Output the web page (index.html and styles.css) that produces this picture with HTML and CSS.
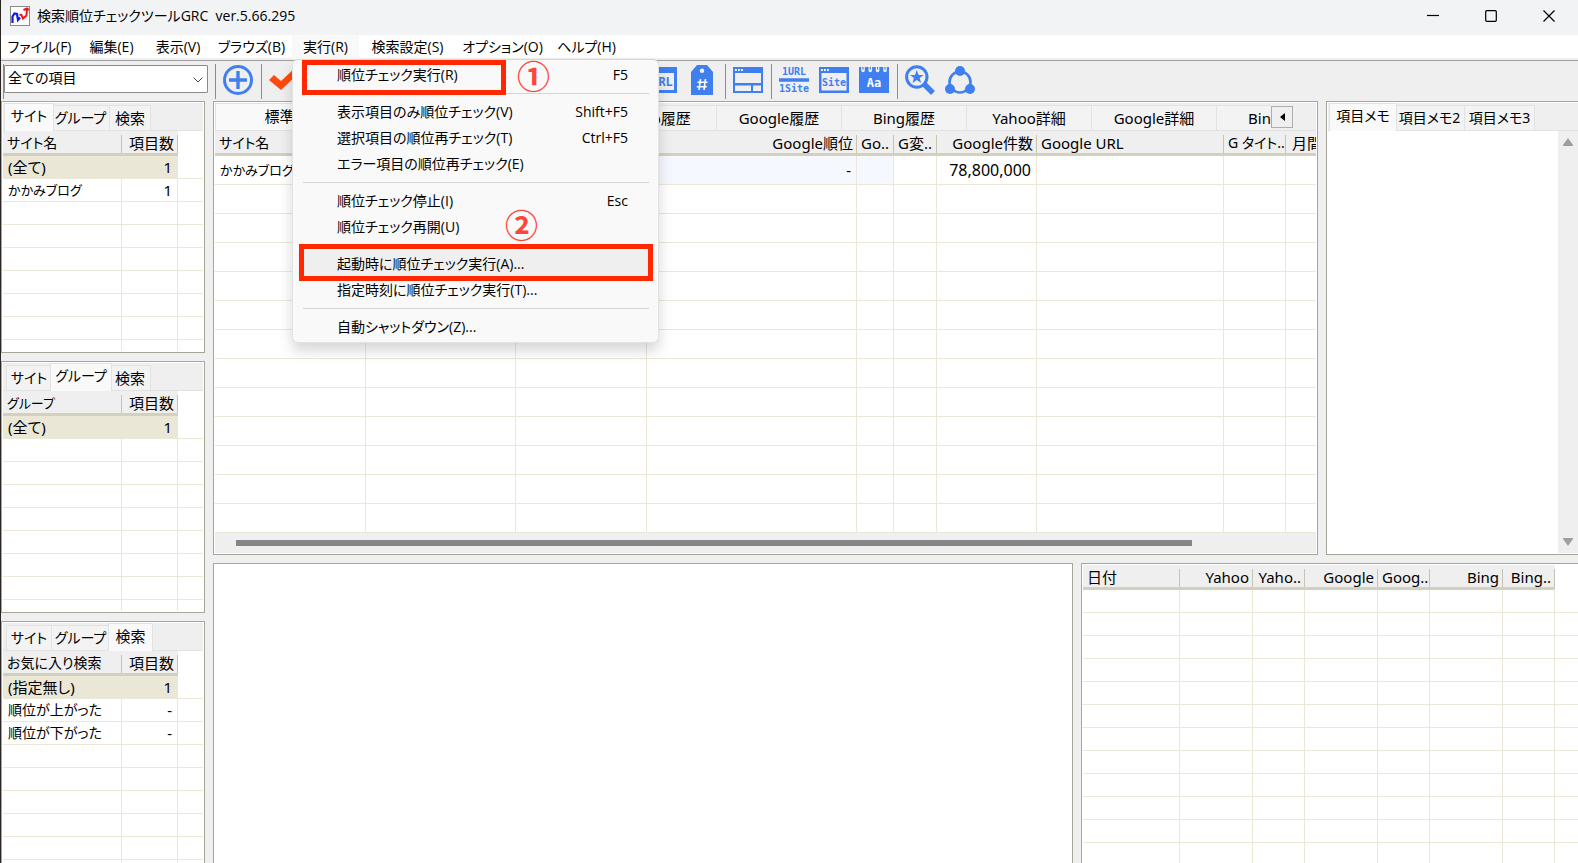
FILE: index.html
```html
<!DOCTYPE html>
<html lang="ja">
<head>
<meta charset="utf-8">
<title>検索順位チェックツールGRC</title>
<link rel="stylesheet" href="styles.css">
</head>
<body>
<div class="window">
  <header class="titlebar">
    <svg class="app-icon" viewBox="0 0 20 20" aria-hidden="true">
      <rect x=".5" y=".5" width="19" height="19" fill="#fff" stroke="#8a8a8a"/>
      <path d="M2.500 17V10.500L4.500 7.500L7 8L8 14L10 11.500" fill="none" stroke="#1414f0" stroke-width="2.200"/>
      <path d="M9.500 8.500L11.500 9L13 12.500L16.500 9.500L17 2M13.500 4L17 2.500L19 4" fill="none" stroke="#f01420" stroke-width="2"/>
    </svg>
    <h1 class="title">検索順位チェックツールGRC&nbsp; ver.5.66.295</h1>
    <button class="win-btn" aria-label="最小化"><svg viewBox="0 0 12 12"><path d="M0 5.500H12"/></svg></button>
    <button class="win-btn" aria-label="最大化"><svg viewBox="0 0 12 12"><rect x=".7" y=".7" width="10.600" height="10.600" rx="1"/></svg></button>
    <button class="win-btn" aria-label="閉じる"><svg viewBox="0 0 12 12"><path d="M.5 .5L11.500 11.500M11.500 .5L.5 11.500"/></svg></button>
  </header>

  <nav class="menubar">
    <button class="menu-btn">ファイル(F)</button>
    <button class="menu-btn">編集(E)</button>
    <button class="menu-btn">表示(V)</button>
    <button class="menu-btn">ブラウズ(B)</button>
    <div class="menu-host">
      <button class="menu-btn open">実行(R)</button>
      <div class="popup">
        <button class="item"><span>順位チェック実行(R)</span><kbd>F5</kbd></button>
        <hr>
        <button class="item"><span>表示項目のみ順位チェック(V)</span><kbd>Shift+F5</kbd></button>
        <button class="item"><span>選択項目の順位再チェック(T)</span><kbd>Ctrl+F5</kbd></button>
        <button class="item"><span>エラー項目の順位再チェック(E)</span></button>
        <hr>
        <button class="item"><span>順位チェック停止(I)</span><kbd>Esc</kbd></button>
        <button class="item"><span>順位チェック再開(U)</span></button>
        <hr>
        <button class="item hover"><span>起動時に順位チェック実行(A)...</span></button>
        <button class="item"><span>指定時刻に順位チェック実行(T)...</span></button>
        <hr>
        <button class="item"><span>自動シャットダウン(Z)...</span></button>
        <div class="mark mark-run"></div>
        <div class="mark mark-startup"></div>
        <span class="num num-one">①</span>
        <span class="num num-two">②</span>
      </div>
    </div>
    <button class="menu-btn">検索設定(S)</button>
    <button class="menu-btn">オプション(O)</button>
    <button class="menu-btn">ヘルプ(H)</button>
  </nav>

  <div class="toolbar">
    <div class="combo">
      <select aria-label="表示項目"><option>全ての項目</option></select>
      <svg viewBox="0 0 10 6" aria-hidden="true"><path d="M.5 .5L5 5L9.500 .5"/></svg>
    </div>
    <i class="sep"></i>
    <button class="tool" aria-label="追加"><svg viewBox="0 0 30 30"><circle cx="15" cy="15" r="13.500" fill="none" stroke="#3f7ff0" stroke-width="3"/><path d="M15 6V24M6 15H24" stroke="#3f7ff0" stroke-width="3.400"/></svg></button>
    <i class="sep"></i>
    <button class="tool" aria-label="順位チェック"><svg viewBox="0 0 30 30"><path d="M0 15L5 10L12 16L25 4L30 8L12 25Z" fill="#ff4a0c"/></svg></button>
    <div class="tool-gap"></div>
    <button class="tool" aria-label="URL"><svg viewBox="0 0 30 30"><path d="M0 2H30V28H0ZM3 8V25H27V8Z" fill="#3f7ff0" fill-rule="evenodd"/><text class="t-mid" x="15" y="21">URL</text></svg></button>
    <button class="tool" aria-label="タグ"><svg viewBox="0 0 30 30"><path d="M10 0H20L26 7V30H4V7ZM15 3.500A2.200 2.200 0 1 0 15 8A2.200 2.200 0 1 0 15 3.500Z" fill="#3f7ff0" fill-rule="evenodd"/><path d="M13.500 14L12 25M18.500 14L17 25M10.500 17.300H20.500M9.800 21.800H19.800" stroke="#fff" stroke-width="1.600"/></svg></button>
    <i class="sep"></i>
    <button class="tool" aria-label="画面"><svg viewBox="0 0 30 30"><path d="M0 2H30V28H0ZM2 8V18H28V8ZM2 20.500V26H18V20.500ZM20 20.500V26H28V20.500Z" fill="#3f7ff0" fill-rule="evenodd"/><path d="M2 5H10" stroke="#fff" stroke-width="1.800" stroke-dasharray="1.800 1.200"/></svg></button>
    <i class="sep"></i>
    <button class="tool" aria-label="1URL 1Site"><svg viewBox="0 0 30 30"><path d="M0 15H30" stroke="#3f7ff0" stroke-width="3.500"/><text class="t-sm" x="15" y="10">1URL</text><text class="t-sm" x="15" y="27">1Site</text></svg></button>
    <button class="tool" aria-label="Site"><svg viewBox="0 0 30 30"><path d="M0 2H30V28H0ZM2.500 8V25.500H27.500V8Z" fill="#3f7ff0" fill-rule="evenodd"/><path d="M2 5H10" stroke="#fff" stroke-width="1.800" stroke-dasharray="1.800 1.200"/><text class="t-site" x="15" y="21">Site</text></svg></button>
    <button class="tool" aria-label="文字"><svg viewBox="0 0 30 30"><path d="M0 2H30V28H0Z" fill="#3f7ff0"/><path d="M2.200 2H5.800V5.500A1.800 1.800 0 0 1 2.200 5.500ZM9.500 2H13.100V5.500A1.800 1.800 0 0 1 9.500 5.500ZM16.800 2H20.400V5.500A1.800 1.800 0 0 1 16.800 5.500ZM24.200 2H27.800V5.500A1.800 1.800 0 0 1 24.200 5.500Z" fill="#efefef"/><path d="M4 2V4.500M11.300 2V4.500M18.600 2V4.500M26 2V4.500" stroke="#3f7ff0" stroke-width="1.200"/><text class="t-aa" x="15" y="21.500">Aa</text></svg></button>
    <i class="sep"></i>
    <button class="tool" aria-label="検索"><svg viewBox="0 0 30 30"><circle cx="11.800" cy="12" r="10.200" fill="none" stroke="#3f7ff0" stroke-width="3"/><path d="M19 19L28 28" stroke="#3f7ff0" stroke-width="5.500"/><path d="M11.800 5L13.600 10H18.600L14.700 13.100L16.100 18L11.800 15.100L7.500 18L8.900 13.100L5 10H10Z" fill="#3f7ff0"/></svg></button>
    <button class="tool" aria-label="共有"><svg viewBox="0 0 30 30"><circle cx="15" cy="17" r="10.500" fill="none" stroke="#3f7ff0" stroke-width="2.600"/><circle cx="15" cy="6" r="5" fill="#3f7ff0"/><circle cx="5" cy="24" r="5" fill="#3f7ff0"/><circle cx="25" cy="24" r="5" fill="#3f7ff0"/></svg></button>
  </div>

  <main class="work">
    <aside class="side">
      <section class="panel side-a">
        <div class="tabs"><button class="tab on w-site">サイト</button><button class="tab w-group">グループ</button><button class="tab w-find">検索</button></div>
        <div class="view">
          <table class="grid small" data-rows="9">
            <colgroup><col class="c119"><col class="c56"><col></colgroup>
            <thead><tr><th class="kana">サイト名</th><th class="r">項目数</th><td class="blank"></td></tr></thead>
            <tbody>
              <tr class="sel"><td>(全て)</td><td class="r">1</td><td></td></tr>
              <tr><td class="site">かかみブログ</td><td class="r">1</td><td></td></tr>
            </tbody>
          </table>
        </div>
      </section>
      <section class="panel side-a">
        <div class="tabs"><button class="tab w-site">サイト</button><button class="tab on w-group">グループ</button><button class="tab w-find">検索</button></div>
        <div class="view">
          <table class="grid small" data-rows="9">
            <colgroup><col class="c119"><col class="c56"><col></colgroup>
            <thead><tr><th class="site">グループ</th><th class="r">項目数</th><td class="blank"></td></tr></thead>
            <tbody><tr class="sel"><td>(全て)</td><td class="r">1</td><td></td></tr></tbody>
          </table>
        </div>
      </section>
      <section class="panel side-b">
        <div class="tabs"><button class="tab w-site">サイト</button><button class="tab w-group">グループ</button><button class="tab on w-find">検索</button></div>
        <div class="view">
          <table class="grid small" data-rows="9">
            <colgroup><col class="c119"><col class="c56"><col></colgroup>
            <thead><tr><th class="kana">お気に入り検索</th><th class="r">項目数</th><td class="blank"></td></tr></thead>
            <tbody>
              <tr class="sel"><td>(指定無し)</td><td class="r">1</td><td></td></tr>
              <tr><td class="kana">順位が上がった</td><td class="r">-</td><td></td></tr>
              <tr><td class="kana">順位が下がった</td><td class="r">-</td><td></td></tr>
            </tbody>
          </table>
        </div>
      </section>
    </aside>

    <div class="content">
      <div class="upper">
        <section class="panel ranks">
          <div class="tabs wide">
            <button class="tab on">標準</button><button class="tab"></button><button class="tab"></button><button class="tab">Yahoo履歴</button><button class="tab">Google履歴</button><button class="tab">Bing履歴</button><button class="tab">Yahoo詳細</button><button class="tab">Google詳細</button><button class="tab last">Bin</button>
            <button class="tab-scroll" aria-label="前のタブ"><svg viewBox="0 0 5 8"><path d="M5 0V8L0 4Z"/></svg></button>
          </div>
          <div class="view">
            <table class="grid large" data-rows="13">
              <colgroup><col class="c151"><col class="c150"><col class="c131"><col class="c210"><col class="c37"><col class="c43"><col class="c100"><col class="c187"><col class="c62"><col></colgroup>
              <thead><tr><th class="kana">サイト名</th><th></th><th></th><th class="r">Google順位</th><th>Go..</th><th>G変..</th><th class="r">Google件数</th><th>Google URL</th><th class="kana">G タイト..</th><th>月間</th></tr></thead>
              <tbody><tr><td class="site">かかみブログ</td><td></td><td></td><td class="r tint">-</td><td class="tint"></td><td></td><td class="r num16">78,800,000</td><td></td><td></td><td></td></tr></tbody>
            </table>
          </div>
          <div class="hscroll"><div class="thumb"></div></div>
        </section>
        <section class="panel memo">
          <div class="tabs"><button class="tab on w-memo">項目メモ</button><button class="tab w-memo2">項目メモ2</button><button class="tab w-memo2">項目メモ3</button></div>
          <div class="memo-body">
            <textarea aria-label="項目メモ"></textarea>
            <div class="vscroll"><svg viewBox="0 0 10 8"><path d="M5 0L10 7V8H0V7Z"/></svg><svg viewBox="0 0 10 8"><path d="M5 8L10 1V0H0V1Z"/></svg></div>
          </div>
        </section>
      </div>
      <div class="lower">
        <section class="panel chart"></section>
        <section class="panel history">
          <div class="view">
            <table class="grid small" data-rows="13">
              <colgroup><col class="c97"><col class="c73"><col class="c52"><col class="c73"><col class="c52"><col class="c73"><col class="c52"><col></colgroup>
              <thead><tr><th>日付</th><th class="r">Yahoo</th><th class="r">Yaho..</th><th class="r">Google</th><th class="r">Goog..</th><th class="r">Bing</th><th class="r">Bing..</th><td class="blank"></td></tr></thead>
              <tbody></tbody>
            </table>
          </div>
        </section>
      </div>
    </div>
  </main>
</div>
<script src="script.js"></script>
</body>
</html>
```
FILE: styles.css
```css
* { box-sizing: border-box; }
html, body { height: 100%; margin: 0; }
body {
  overflow: hidden;
  background: #efefef;
  color: #000;
  font-family: "Noto Sans", "Noto Sans CJK JP", sans-serif;
  font-size: 15px;
  line-height: 22px;
  font-feature-settings: "palt";
}
button, select, textarea { font: inherit; font-feature-settings: inherit; color: inherit; border: 0; margin: 0; padding: 0; background: none; }
button { white-space: nowrap; }
svg { display: block; }

.window { height: 100vh; display: flex; flex-direction: column; border-left: 1px solid #2b2623; }

/* title bar */
.titlebar { flex: none; height: 35px; display: flex; align-items: center; background: #f2f3f4; padding: 0 0 3px 9px; border-top-left-radius: 8px; }
.app-icon { width: 20px; height: 20px; }
.title { flex: 1; margin: 0 0 0 7px; font-family: "Open Sans", "Noto Sans CJK JP", sans-serif; font-size: 14px; font-weight: 400; }
.win-btn { width: 58px; height: 32px; display: grid; place-items: center; }
.win-btn svg { width: 12px; height: 12px; fill: none; stroke: #000; stroke-width: 1.2; }

/* menu bar and drop-down */
.menubar {
  flex: none; height: 25px; display: grid; grid-template-columns: 77px 67px 66px 81px 67px 97px 93px 75px;
  background: #fff; border-bottom: 2px solid #f0f0f0;
  font-family: "Open Sans", "Noto Sans CJK JP", sans-serif; font-size: 14px;
}
.menu-btn { width: 100%; height: 24px; text-align: center; }
.menu-btn.open { background: #f9f9f9; }
.menu-host { position: relative; }
.popup {
  position: absolute; z-index: 5; top: 24px; left: 0; width: 367px;
  display: flex; flex-direction: column; padding: 2px 0;
  background: #f9f9f9; border: 1px solid #e3e3e3; border-top-color: #d8d8d8; border-radius: 6px;
  box-shadow: 0 8px 14px rgba(0, 0, 0, .16);
}
.item { display: flex; justify-content: space-between; align-items: center; height: 26px; margin: 0 5px; padding: 0 25px 0 39px; }
.item.hover { background: #efefef; }
kbd { font-family: inherit; }
.popup hr { width: 346px; height: 1px; margin: 5px auto; border: 0; background: #d6d6d6; }
.mark { position: absolute; border: 5px solid #ff2800; }
.mark-run { left: 9px; top: 0; width: 204px; height: 35px; }
.mark-startup { left: 6px; top: 184px; width: 354px; height: 37px; }
.num { position: absolute; color: #ff4438; font-family: "Noto Sans CJK JP", sans-serif; font-size: 33px; font-weight: 700; line-height: 34px; font-feature-settings: normal; }
.num-one { left: 224px; top: -2px; }
.num-two { left: 212px; top: 147px; }

/* tool bar */
.toolbar { flex: none; height: 41px; display: flex; align-items: center; border-top: 1px solid #a0a0a0; padding-left: 2px; }
.combo { width: 206px; height: 35px; display: flex; align-items: center; position: relative; border-left: 1px solid #8c8c8c; padding: 0 1px 4px 0; }
.combo select { flex: 1; height: 28px; appearance: none; background: #fff; border: 1px solid #8a8a8a; border-radius: 1px; padding: 0 3px 2px; font-size: 14px; }
.combo svg { position: absolute; right: 6px; top: 13px; width: 10px; height: 6px; fill: none; stroke: #444; }
.sep { width: 6px; height: 35px; background: linear-gradient(#8c8c8c, #8c8c8c) 3px 0 / 1px 100% no-repeat; }
.sep:first-of-type { margin-left: 3px; }
.tool { width: 40px; height: 38px; padding: 0 5px 2px; flex: none; }
.tool svg { width: 30px; height: 30px; }
.tool-gap { width: 338px; flex: none; }
.tool text { font-family: "DejaVu Sans Mono", monospace; font-weight: 700; fill: #3f7ff0; text-anchor: middle; }
.t-sm { font-size: 10px; }
.t-mid { font-size: 12px; }
.t-site { font-size: 10px; }
.tool .t-aa { font-size: 12px; fill: #fff; }

/* work area */
.work { flex: 1; min-height: 0; display: flex; gap: 8px; }
.side { flex: none; width: 204px; display: flex; flex-direction: column; gap: 8px; }
.side-a { flex: 252 1 0; }
.side-b { flex: 246 1 0; margin-bottom: -4px; }
.content { flex: 1; min-width: 0; display: flex; flex-direction: column; gap: 8px; }
.upper { flex: 454 1 0; min-height: 0; display: flex; gap: 8px; }
.lower { flex: 304 1 0; min-height: 0; display: flex; gap: 8px; margin-bottom: -4px; }
.panel { display: flex; flex-direction: column; min-height: 0; min-width: 0; background: #fff; border: 1px solid #a7a698; padding: 1px; overflow: hidden; }
.ranks { flex: 1; }
.memo { flex: none; width: 254px; margin-right: -2px; }
.chart { flex: 1; }
.history { flex: none; width: 499px; margin-right: -2px; }
.view { flex: 1; min-height: 0; overflow: hidden; }

/* tabs */
.tabs { flex: none; height: 28px; display: flex; align-items: flex-end; background: #efefef; border-bottom: 1px solid #e2e2e2; padding-left: 3px; }
.tab { flex: none; height: 25px; background: #f3f3f3; border: 1px solid #e2e2e2; border-width: 1px 1px 0 0; overflow: hidden; font-size: 14px; }
.tab:first-child { border-left-width: 1px; }
.tab.on { height: 28px; margin: 0 -2px -1px; border-left-width: 1px; background: #f9f9f9; padding-bottom: 3px; position: relative; }
.w-site { width: 46px; }
.w-group { width: 58px; }
.tab.w-find { width: 41px; font-size: 15px; }
.w-memo { width: 64px; }
.w-memo2 { width: 70px; }
.w-site.on { width: 50px; }
.w-group.on { width: 62px; }
.tab.w-find.on { width: 45px; }
.w-memo.on { width: 68px; }
.wide { position: relative; overflow: hidden; padding-left: 2px; }
.wide .tab { width: 125px; font-size: 15px; }
.wide .tab.on { width: 129px; }
.wide .tab.last { width: 54px; text-align: right; border-right: 0; }
.tab-scroll { flex: none; width: 22px; height: 22px; margin-bottom: 2px; background: #efefef; border: 1px solid #adadad; display: grid; place-items: center; }
.tab-scroll svg { width: 5px; height: 8px; }

/* tables */
.grid { width: 100%; table-layout: fixed; border-collapse: separate; border-spacing: 0; }
.grid th, .grid td { padding: 0 4px; overflow: hidden; white-space: nowrap; text-align: left; font-weight: 400; line-height: 20px; }
.grid th { height: 25px; padding-top: 2px; background: linear-gradient(#c7c5b2, #c7c5b2) right 4px / 1px 18px no-repeat #efefef; border-bottom: 3px solid #d4d0be; }
.grid .r { text-align: right; }
.grid .kana { font-size: 14px; }
.grid .site { font-size: 13px; }
.grid tbody td { border: 1px solid #ebe8d8; border-width: 0 1px 1px 0; padding: 0 5px; }
.grid tbody td:last-child { border-right: 0; }
.small tbody td { height: 23px; }
.large tbody td { height: 29px; }
.large th:last-child { background: #efefef; padding-left: 6px; }
.sel td:not(:last-child) { background: #ebe7d6; border-right-color: #ebe7d6; }
.grid .tint { background: #f5f9ff; }
.num16 { font-size: 16px; }
.c37 { width: 37px; } .c43 { width: 43px; } .c52 { width: 52px; } .c56 { width: 56px; }
.c62 { width: 62px; } .c73 { width: 73px; } .c97 { width: 97px; } .c100 { width: 100px; }
.c119 { width: 119px; } .c131 { width: 131px; } .c150 { width: 150px; } .c151 { width: 151px; }
.c187 { width: 187px; } .c210 { width: 210px; }

/* scroll bars */
.hscroll { flex: none; height: 20px; background: #efefef; padding: 7px 124px 7px 21px; }
.thumb { height: 6px; background: #868686; }
.memo-body { flex: 1; min-height: 0; display: flex; }
.memo-body textarea { flex: 1; min-width: 0; resize: none; outline: 0; }
.vscroll { width: 20px; background: #efefef; display: flex; flex-direction: column; justify-content: space-between; align-items: center; padding: 7px 0; }
.vscroll svg { width: 10px; height: 8px; fill: #9f9f9f; }
```
FILE: script.js
```javascript
// Pads every table with empty rows so the grid lines fill its panel.
document.querySelectorAll('table[data-rows]').forEach(function (table) {
  var body = table.tBodies[0];
  var columns = table.querySelectorAll('col').length;
  while (body.rows.length < Number(table.dataset.rows)) {
    var row = body.insertRow();
    for (var i = 0; i < columns; i++) row.insertCell();
  }
});
```
